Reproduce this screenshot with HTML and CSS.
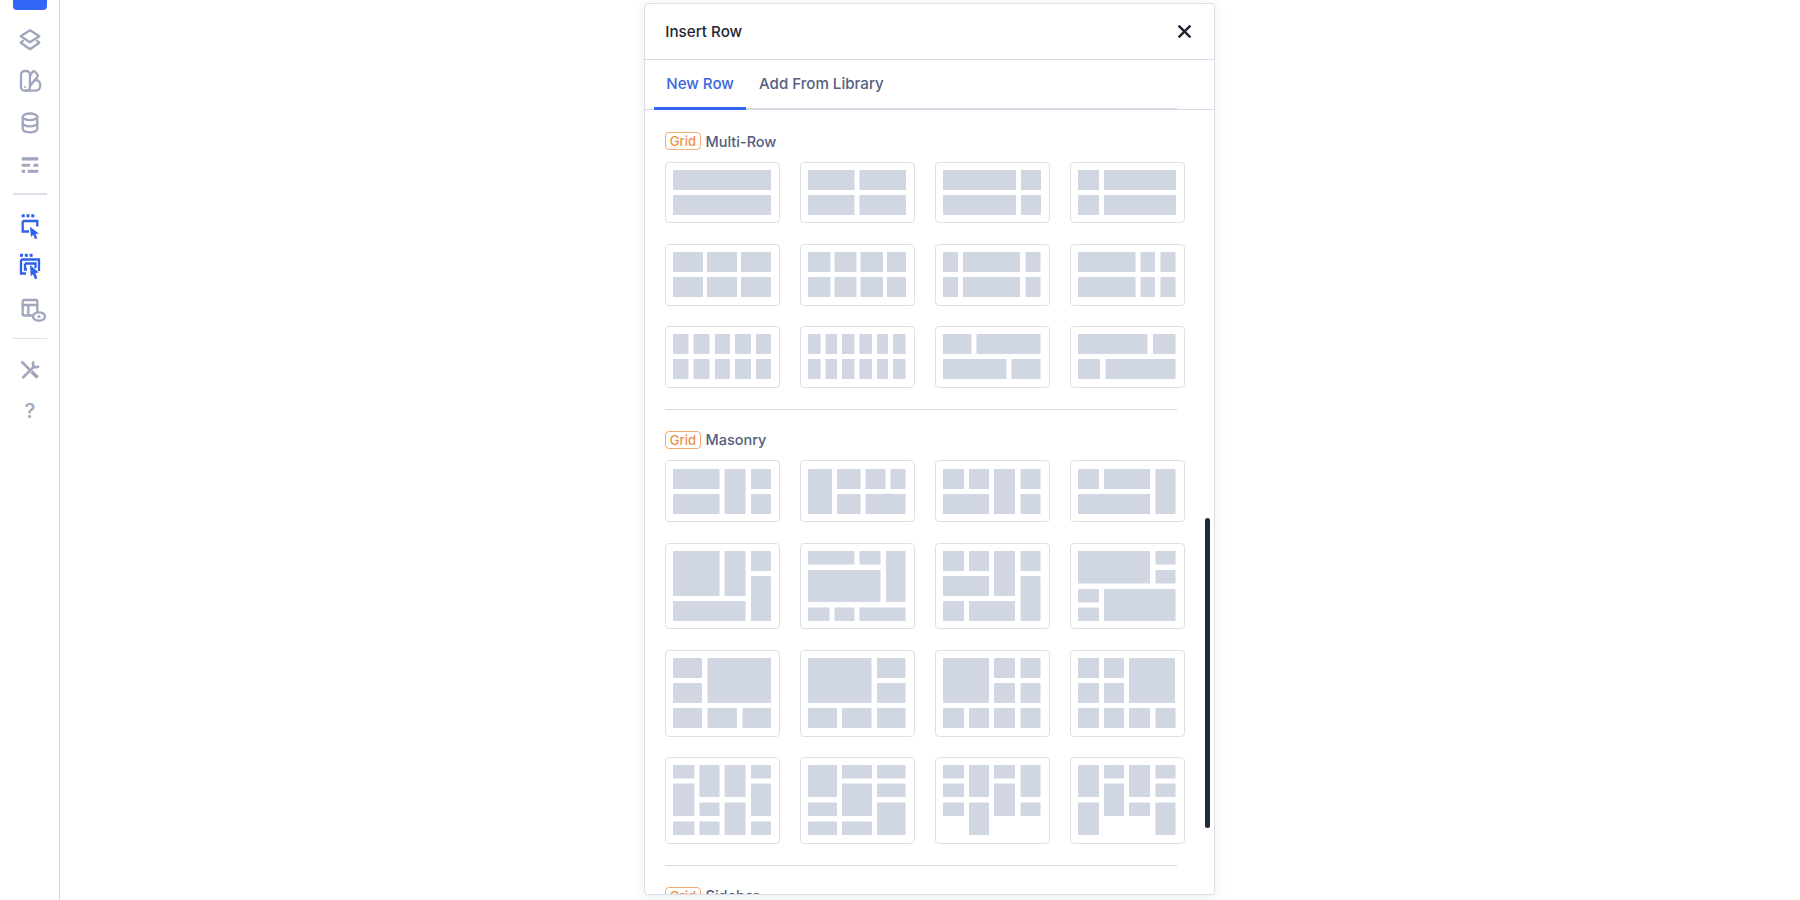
FILE: index.html
```html
<!DOCTYPE html>
<html lang="en">
<head>
<meta charset="utf-8">
<title>Insert Row</title>
<link rel="stylesheet" href="styles.css">
</head>
<body>
<div class="app">
  <nav class="sidebar">
    <div class="top-btn"></div>
    <div class="nav-group">
      <span class="nav-item"><svg viewBox="0 0 24 24" class="ico"><path d="M12 2.300 21.300 8.300 12 14.300 2.700 8.300Z"/><path d="M5 12.800 2.700 14.700 12 21.200 21.300 14.700 19 12.800"/></svg></span>
      <span class="nav-item"><svg viewBox="0 0 24 24" class="ico"><rect x="3" y="2" width="9" height="19.700" rx="3.800"/><path d="M12 6.500 14.500 3C15.300 2 16.300 2 17 2.800L19.300 5.300C20 6.200 20 7 19.300 8L12 17"/><path d="M17 11C20.500 10.800 22.300 13.500 22.300 16.500 22.300 19.800 20 21.700 17 21.700H7.500"/><circle class="grey-fill" cx="7" cy="18" r="1"/></svg></span>
      <span class="nav-item"><svg viewBox="0 0 24 24" class="ico"><ellipse cx="12" cy="5.800" rx="7.300" ry="3.300"/><path d="M4.700 5.800V18C4.700 19.900 8 21.300 12 21.300S19.300 19.900 19.300 18V5.800"/><path d="M4.700 12C4.700 13.900 8 15.300 12 15.300S19.300 13.900 19.300 12"/></svg></span>
      <span class="nav-item"><svg viewBox="0 0 24 24" class="ico ico-fill"><rect x="3.700" y="4.200" width="16.600" height="3.300"/><rect x="3.700" y="10.800" width="8.300" height="2.900"/><rect x="15.300" y="10.800" width="5" height="2.900"/><rect x="3.700" y="16.800" width="3.300" height="3"/><rect x="9.700" y="16.800" width="10.600" height="3"/></svg></span>
    </div>
    <hr class="nav-sep">
    <div class="nav-group">
      <span class="nav-item"><svg viewBox="0 0 24 24" class="ico ico-blue"><path d="M4.700 7V17.500H11"/><path d="M4.700 7H19.300V12.500"/><path class="blue-fill" d="M12 12.700 20.800 19.500 17.500 20 19.300 24.300 17 25 15.300 20.800 13 23Z"/><rect class="blue-fill" x="3.700" y="0.300" width="3" height="3"/><rect class="blue-fill" x="8.500" y="0.300" width="3" height="3"/><rect class="blue-fill" x="13.300" y="0.300" width="3" height="3"/></svg></span>
      <span class="nav-item"><svg viewBox="0 0 24 24" class="ico ico-blue"><path d="M3 4.500V18.500H8"/><path d="M3 4.500H21V16"/><path d="M7 8.500V14.500H9"/><path d="M7 8.500H17.500V13"/><path class="blue-fill" d="M12 10 20.800 17.500 17.500 18 19.300 23.300 17 24.300 15 19.200 12.800 21.300Z"/><rect class="blue-fill" x="2" y="-1.200" width="3" height="3"/><rect class="blue-fill" x="6.800" y="-1.200" width="3" height="3"/><rect class="blue-fill" x="11.600" y="-1.200" width="3" height="3"/></svg></span>
      <span class="nav-item"><svg viewBox="0 0 24 24" class="ico"><rect x="4.700" y="3" width="14.600" height="15.500" rx="1.500"/><path d="M4.700 8H19.300"/><path d="M10.300 8V18.500"/><ellipse class="white-fill" cx="21" cy="19.500" rx="6" ry="4.200"/><circle class="grey-fill" cx="21" cy="19.500" r="1.600"/></svg></span>
    </div>
    <hr class="nav-sep">
    <div class="nav-group">
      <span class="nav-item"><svg viewBox="0 0 24 24" class="ico ico-thick"><path d="M4.500 20 15.500 9"/><path d="M16 3.500C14 5.500 14.500 9.500 19 9.300 20 9.200 20.500 8.500 21 8"/><path d="M5 5 11.500 11.500"/><path d="M3.500 5.500 5.500 3.500"/><path class="heavy" d="M13.500 13.500 19.500 19.500"/></svg></span>
      <span class="nav-item"><span class="help">?</span></span>
    </div>
  </nav>

  <main class="stage">
    <section class="modal">
      <header class="modal-head">
        <h2 class="modal-title">Insert Row</h2>
        <svg class="close" viewBox="0 0 14 14"><path d="M1.500 1.500 12.500 12.500M12.500 1.500 1.500 12.500"/></svg>
      </header>
      <div class="tabs">
        <div class="tablist">
          <span class="tab tab-active">New Row</span>
          <span class="tab">Add From Library</span>
        </div>
      </div>
      <div class="modal-body">
        <div class="scrollbar"></div>

        <h3 class="group-label"><span class="badge">Grid</span> Multi-Row</h3>
        <div class="thumbs">
          <div class="thumb"><svg viewBox="0 0 98 45"><rect width="98" height="20"/><rect y="25" width="98" height="20"/></svg></div>
          <div class="thumb"><svg viewBox="0 0 98 45"><rect width="46.500" height="20"/><rect x="51.500" width="46.500" height="20"/><rect y="25" width="46.500" height="20"/><rect x="51.500" y="25" width="46.500" height="20"/></svg></div>
          <div class="thumb"><svg viewBox="0 0 98 45"><rect width="73" height="20"/><rect x="78" width="20" height="20"/><rect y="25" width="73" height="20"/><rect x="78" y="25" width="20" height="20"/></svg></div>
          <div class="thumb"><svg viewBox="0 0 98 45"><rect width="21" height="20"/><rect x="26" width="72" height="20"/><rect y="25" width="21" height="20"/><rect x="26" y="25" width="72" height="20"/></svg></div>

          <div class="thumb"><svg viewBox="0 0 98 45"><rect width="30" height="20"/><rect x="34" width="30" height="20"/><rect x="68" width="30" height="20"/><rect y="25" width="30" height="20"/><rect x="34" y="25" width="30" height="20"/><rect x="68" y="25" width="30" height="20"/></svg></div>
          <div class="thumb"><svg viewBox="0 0 98 45"><rect width="22.500" height="20"/><rect x="26.500" width="22" height="20"/><rect x="52.500" width="22.500" height="20"/><rect x="79" width="19" height="20"/><rect y="25" width="22.500" height="20"/><rect x="26.500" y="25" width="22" height="20"/><rect x="52.500" y="25" width="22.500" height="20"/><rect x="79" y="25" width="19" height="20"/></svg></div>
          <div class="thumb"><svg viewBox="0 0 98 45"><rect width="15" height="20"/><rect x="20" width="57" height="20"/><rect x="82.500" width="15" height="20"/><rect y="25" width="15" height="20"/><rect x="20" y="25" width="57" height="20"/><rect x="82.500" y="25" width="15" height="20"/></svg></div>
          <div class="thumb"><svg viewBox="0 0 98 45"><rect width="57.500" height="20"/><rect x="62.500" width="14.500" height="20"/><rect x="82.500" width="15" height="20"/><rect y="25" width="57.500" height="20"/><rect x="62.500" y="25" width="14.500" height="20"/><rect x="82.500" y="25" width="15" height="20"/></svg></div>

          <div class="thumb"><svg viewBox="0 0 98 45"><rect width="15.500" height="20"/><rect x="20.500" width="16" height="20"/><rect x="42" width="15" height="20"/><rect x="62" width="16" height="20"/><rect x="83" width="15" height="20"/><rect y="25" width="15.500" height="20"/><rect x="20.500" y="25" width="16" height="20"/><rect x="42" y="25" width="15" height="20"/><rect x="62" y="25" width="16" height="20"/><rect x="83" y="25" width="15" height="20"/></svg></div>
          <div class="thumb"><svg viewBox="0 0 98 45"><rect width="12.500" height="20"/><rect x="17.500" width="11.500" height="20"/><rect x="34" width="12.500" height="20"/><rect x="51.500" width="12.500" height="20"/><rect x="69" width="11" height="20"/><rect x="85" width="12.500" height="20"/><rect y="25" width="12.500" height="20"/><rect x="17.500" y="25" width="11.500" height="20"/><rect x="34" y="25" width="12.500" height="20"/><rect x="51.500" y="25" width="12.500" height="20"/><rect x="69" y="25" width="11" height="20"/><rect x="85" y="25" width="12.500" height="20"/></svg></div>
          <div class="thumb"><svg viewBox="0 0 98 45"><rect width="28.500" height="20"/><rect x="33.500" width="64" height="20"/><rect y="25" width="63.500" height="20"/><rect x="68.500" y="25" width="29" height="20"/></svg></div>
          <div class="thumb"><svg viewBox="0 0 98 45"><rect width="69.500" height="20"/><rect x="75" width="22.500" height="20"/><rect y="25" width="22" height="20"/><rect x="27.500" y="25" width="70" height="20"/></svg></div>
        </div>

        <hr class="group-sep">

        <h3 class="group-label"><span class="badge">Grid</span> Masonry</h3>
        <div class="thumbs">
          <div class="thumb"><svg viewBox="0 0 98 45"><rect width="46.500" height="20"/><rect y="25" width="46.500" height="20"/><rect x="51.500" width="21" height="45"/><rect x="78" width="20" height="20"/><rect x="78" y="25" width="20" height="20"/></svg></div>
          <div class="thumb"><svg viewBox="0 0 98 45"><rect width="24" height="45"/><rect x="29" width="23.500" height="20"/><rect x="29" y="25" width="23.500" height="20"/><rect x="57.500" width="20" height="20"/><rect x="82.500" width="15" height="20"/><rect x="57.500" y="25" width="40" height="20"/></svg></div>
          <div class="thumb"><svg viewBox="0 0 98 45"><rect width="21" height="20"/><rect x="26" width="20" height="20"/><rect y="25" width="46" height="20"/><rect x="51" width="21" height="45"/><rect x="77.500" width="20" height="20"/><rect x="77.500" y="25" width="20" height="20"/></svg></div>
          <div class="thumb"><svg viewBox="0 0 98 45"><rect width="21" height="20"/><rect x="26" width="46" height="20"/><rect y="25" width="72" height="20"/><rect x="77.500" width="20" height="45"/></svg></div>

          <div class="thumb thumb-tall"><svg viewBox="0 0 98 70"><rect width="46.500" height="45"/><rect x="51.500" width="21" height="45"/><rect x="78" width="20" height="20"/><rect x="78" y="25" width="20" height="45"/><rect y="50" width="72.500" height="20"/></svg></div>
          <div class="thumb thumb-tall"><svg viewBox="0 0 98 70"><rect width="46.500" height="13.500"/><rect x="51.500" width="21" height="13.500"/><rect x="78" width="19.500" height="51"/><rect y="19" width="72.500" height="32"/><rect y="56.500" width="21.500" height="13.500"/><rect x="26.500" y="56.500" width="20" height="13.500"/><rect x="51.500" y="56.500" width="46" height="13.500"/></svg></div>
          <div class="thumb thumb-tall"><svg viewBox="0 0 98 70"><rect width="21" height="20"/><rect x="26" width="20" height="20"/><rect x="51" width="21" height="45"/><rect x="77.500" width="20" height="20"/><rect y="25" width="46" height="20"/><rect x="77.500" y="25" width="20" height="45"/><rect y="50" width="21" height="20"/><rect x="26" y="50" width="46" height="20"/></svg></div>
          <div class="thumb thumb-tall"><svg viewBox="0 0 98 70"><rect width="72" height="32.500"/><rect x="77.500" width="20" height="13.500"/><rect x="77.500" y="19" width="20" height="13.500"/><rect y="38" width="21" height="13.500"/><rect y="56.500" width="21" height="13.500"/><rect x="26" y="38" width="71.500" height="32"/></svg></div>

          <div class="thumb thumb-tall"><svg viewBox="0 0 98 70"><rect width="29" height="20"/><rect y="25" width="29" height="20"/><rect x="34.500" width="63.500" height="45"/><rect y="50" width="29" height="20"/><rect x="34.500" y="50" width="29.500" height="20"/><rect x="69.500" y="50" width="28.500" height="20"/></svg></div>
          <div class="thumb thumb-tall"><svg viewBox="0 0 98 70"><rect width="63.500" height="45"/><rect x="69" width="28.500" height="20"/><rect x="69" y="25" width="28.500" height="20"/><rect y="50" width="29" height="20"/><rect x="34" y="50" width="29.500" height="20"/><rect x="69" y="50" width="28.500" height="20"/></svg></div>
          <div class="thumb thumb-tall"><svg viewBox="0 0 98 70"><rect width="46" height="45"/><rect x="51" width="21" height="20"/><rect x="77.500" width="20" height="20"/><rect x="51" y="25" width="21" height="20"/><rect x="77.500" y="25" width="20" height="20"/><rect y="50" width="21" height="20"/><rect x="26" y="50" width="20" height="20"/><rect x="51" y="50" width="21" height="20"/><rect x="77.500" y="50" width="20" height="20"/></svg></div>
          <div class="thumb thumb-tall"><svg viewBox="0 0 98 70"><rect width="21" height="20"/><rect x="26" width="20" height="20"/><rect x="51" width="46" height="45"/><rect y="25" width="21" height="20"/><rect x="26" y="25" width="20" height="20"/><rect y="50" width="21" height="20"/><rect x="26" y="50" width="20" height="20"/><rect x="51" y="50" width="21" height="20"/><rect x="77.500" y="50" width="20" height="20"/></svg></div>

          <div class="thumb thumb-tall"><svg viewBox="0 0 98 70"><rect width="21.500" height="13.500"/><rect y="18.500" width="21.500" height="32.500"/><rect y="56.500" width="21.500" height="13.500"/><rect x="26.500" width="20" height="32"/><rect x="26.500" y="37.500" width="20" height="13.500"/><rect x="26.500" y="56.500" width="20" height="13.500"/><rect x="51.500" width="21" height="32"/><rect x="51.500" y="37.500" width="21" height="32.500"/><rect x="78" width="20" height="13.500"/><rect x="78" y="18.500" width="20" height="32.500"/><rect x="78" y="56.500" width="20" height="13.500"/></svg></div>
          <div class="thumb thumb-tall"><svg viewBox="0 0 98 70"><rect width="29" height="32"/><rect y="37.500" width="29" height="13.500"/><rect y="56.500" width="29" height="13.500"/><rect x="34" width="30" height="13.500"/><rect x="34" y="18.500" width="30" height="32.500"/><rect x="34" y="56.500" width="30" height="13.500"/><rect x="69" width="28.500" height="13.500"/><rect x="69" y="18.500" width="28.500" height="13.500"/><rect x="69" y="37.500" width="28.500" height="32.500"/></svg></div>
          <div class="thumb thumb-tall"><svg viewBox="0 0 98 70"><rect width="21" height="13.500"/><rect y="18.500" width="21" height="13.500"/><rect y="37.500" width="21" height="13.500"/><rect x="26" width="20" height="32"/><rect x="26" y="37.500" width="20" height="32.500"/><rect x="51" width="21" height="13.500"/><rect x="51" y="18.500" width="21" height="32.500"/><rect x="77.500" width="20" height="32"/><rect x="77.500" y="37.500" width="20" height="13.500"/></svg></div>
          <div class="thumb thumb-tall"><svg viewBox="0 0 98 70"><rect width="21" height="32"/><rect y="37.500" width="21" height="32.500"/><rect x="26" width="20" height="13.500"/><rect x="26" y="18.500" width="20" height="32.500"/><rect x="51" width="21" height="32"/><rect x="51" y="37.500" width="21" height="13.500"/><rect x="77.500" width="20" height="13.500"/><rect x="77.500" y="18.500" width="20" height="13.500"/><rect x="77.500" y="37.500" width="20" height="32.500"/></svg></div>
        </div>

        <hr class="group-sep">

        <h3 class="group-label"><span class="badge">Grid</span> Sidebar</h3>
      </div>
    </section>
  </main>
</div>
</body>
</html>
```
FILE: styles.css
```css
* { box-sizing: border-box; }
html, body { margin: 0; height: 100%; background: #fff; overflow: hidden; }
body { font-family: Inter, "Liberation Sans", sans-serif; }

.app { display: flex; height: 900px; }

.sidebar {
  width: 60px;
  flex: none;
  display: flex;
  flex-direction: column;
  align-items: center;
  padding-left: 1px;
  border-right: 1px solid #d3d6e2;
}
.top-btn {
  width: 34px;
  height: 10px;
  background: #3366f5;
  border-radius: 0 0 4px 4px;
  margin-bottom: 9px;
}
.nav-group { display: flex; flex-direction: column; width: 100%; align-items: center; }
.nav-item { height: 41.6px; width: 100%; display: flex; align-items: center; justify-content: center; }
.nav-sep { width: 34px; height: 1.5px; border: 0; background: #dcdfe7; margin: 8px 0 10px; flex: none; }

.ico { width: 24px; height: 24px; overflow: visible; fill: none; stroke: #a0a6bc; stroke-width: 2.300; stroke-linejoin: round; stroke-linecap: round; }
.ico-fill { fill: #a0a6bc; stroke: none; }
.ico-blue { stroke: #2f62ea; stroke-linecap: butt; stroke-linejoin: miter; }
.blue-fill { fill: #2f62ea; stroke: none; }
.grey-fill { fill: #a0a6bc; stroke: none; }
.white-fill { fill: #fff; }
.ico-thick { stroke-width: 2.500; stroke-linecap: butt; }
.heavy { stroke-width: 3.600; }
.help { font-size: 20px; font-weight: 600; color: #a6acbf; line-height: 1; margin-top: -2px; }

.stage { flex: 1; display: flex; justify-content: center; padding: 3px 1px 0 0; min-width: 0; }

.modal {
  width: 571px;
  height: 892px;
  display: flex;
  flex-direction: column;
  background: #fff;
  border: 1px solid #dcdfe8;
  border-radius: 4px;
  box-shadow: 0 2px 14px rgba(40, 50, 80, .09);
}
.modal-head {
  height: 56px;
  flex: none;
  display: flex;
  align-items: center;
  justify-content: space-between;
  padding: 0 22px 0 20.300px;
  border-bottom: 1px solid #d8dbe5;
}
.modal-title { margin: 0; font-size: 15.200px; font-weight: 500; color: #1f2633; }
.close { width: 15px; height: 15px; fill: none; stroke: #1f2633; stroke-width: 2.300; margin-top: -1px; }

.tabs { height: 50px; flex: none; border-bottom: 1px solid #d8dbe5; }
.tablist {
  margin-left: 9px;
  width: 523px;
  height: 50px;
  display: flex;
  gap: 13px;
  border-bottom: 2px solid #d5d9e4;
}
.tab {
  height: 50px;
  display: flex;
  align-items: center;
  font-size: 15.100px;
  font-weight: 500;
  color: #566080;
  border-bottom: 3px solid transparent;
}
.tab-active {
  width: 92px;
  justify-content: center;
  color: #3a66e0;
  border-bottom-color: #3366f5;
}

.modal-body {
  position: relative;
  flex: 1;
  min-height: 0;
  overflow: hidden;
  padding: 22px 20px 0 20.300px;
}
.scrollbar {
  position: absolute;
  right: 4px;
  top: 408px;
  width: 5px;
  height: 310px;
  border-radius: 3px;
  background: #1f2a3a;
}
.group-label {
  margin: 0 0 11.700px;
  height: 18px;
  display: flex;
  align-items: center;
  gap: 5px;
  font-size: 14.500px;
  font-weight: 500;
  color: #525c7c;
}
.badge {
  height: 18px;
  padding: 0 3.500px;
  display: flex;
  align-items: center;
  border: 1.300px solid #f2ab72;
  border-radius: 4px;
  font-size: 13px;
  font-weight: 500;
  color: #ee8f48;
}
.thumbs {
  display: grid;
  grid-template-columns: repeat(4, 115px);
  column-gap: 20px;
  row-gap: 20.500px;
}
.thumb {
  height: 61.700px;
  padding: 7.350px 7.500px 7.350px 7px;
  border: 1.300px solid #dde0e9;
  border-radius: 4px;
  background: #fff;
}
.thumb-tall { height: 86.700px; }
.thumb svg { display: block; width: 98px; fill: #d1d6e3; }
.thumb svg rect { rx: .5px; }
.group-sep {
  width: 512px;
  height: 1px;
  border: 0;
  background: #d8dbe5;
  margin: 21px 0 21px;
}
```
